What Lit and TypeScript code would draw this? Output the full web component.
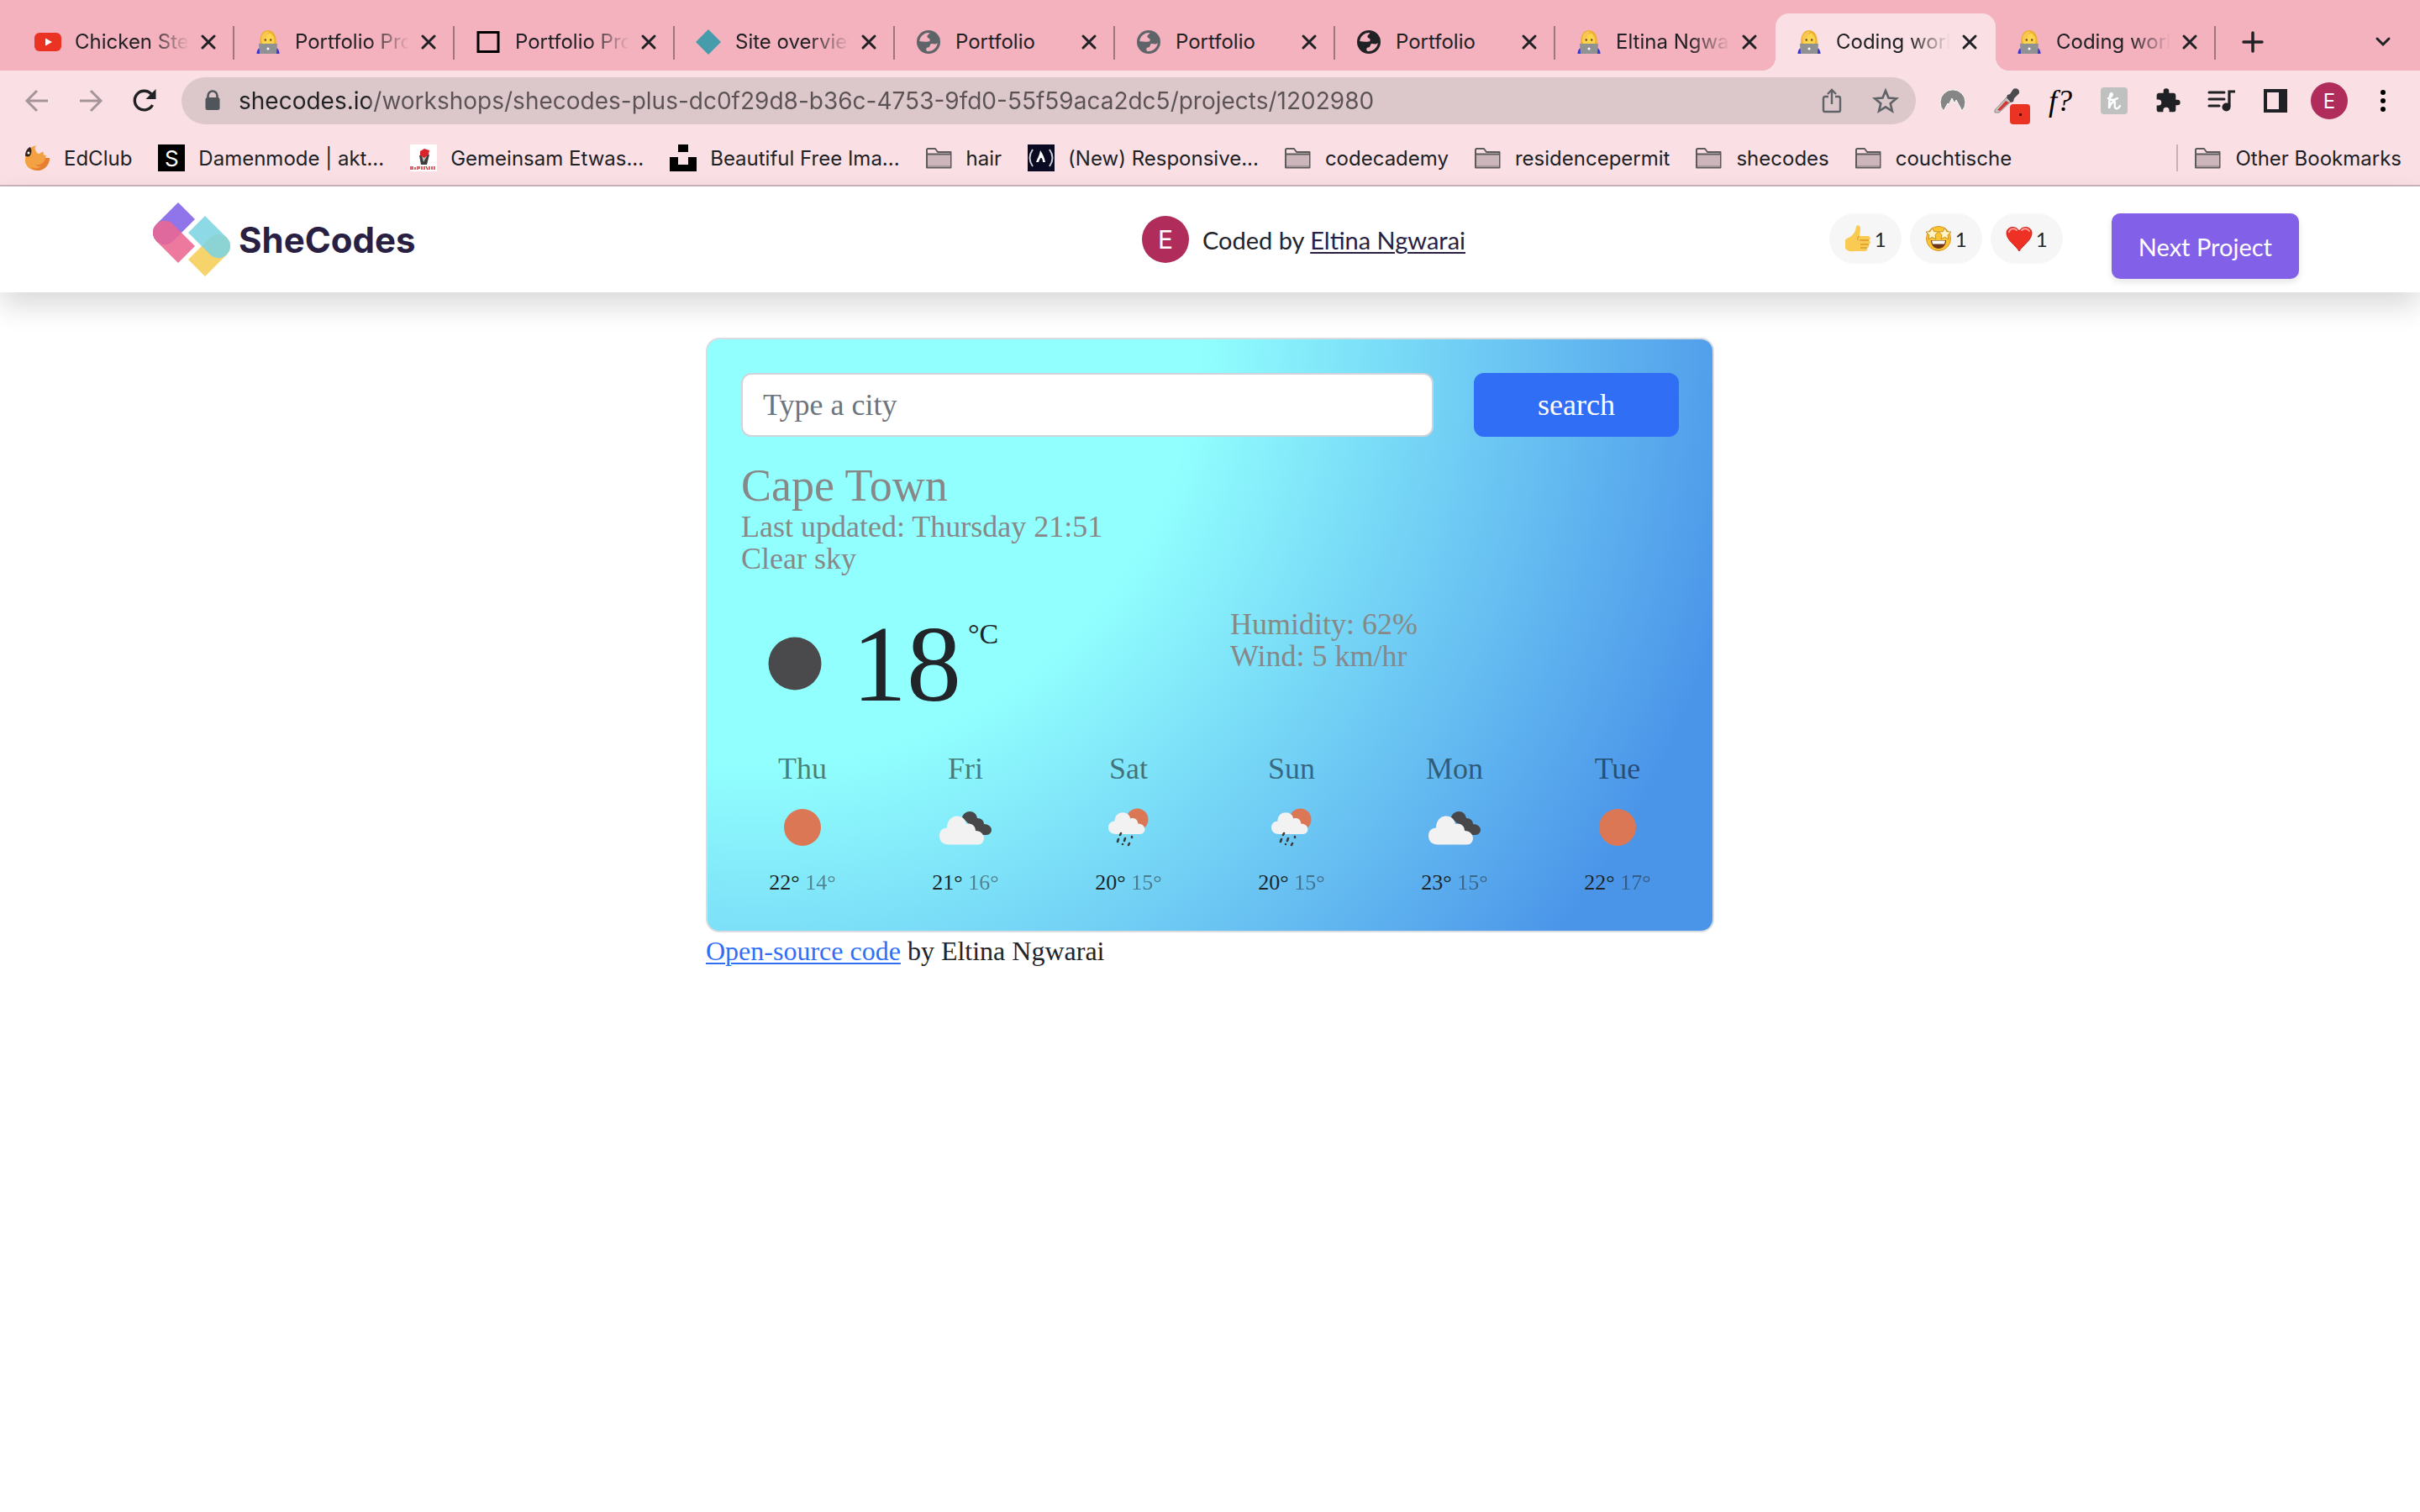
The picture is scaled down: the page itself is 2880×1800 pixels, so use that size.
import { LitElement, html, css, svg, nothing } from "lit";
import { customElement, property } from "lit/decorators.js";
import { classMap } from "lit/directives/class-map.js";

const coder = html`<svg class="ico" viewBox="0 0 32 32" width="32" height="32" aria-hidden="true">
  <path d="M2.500 30c0-3 1-6 4-7h19c3 1 4 4 4 7z" fill="#3a35d0" />
  <path d="M6.500 21C5 11 8 2 15.500 2S27 9 25.500 21z" fill="#eeb02f" />
  <path d="M8.500 14c0-3 2-5 5-6 2-1 4-2 5-3 2 2 5 5 5 9 0 5-3 8-7.500 8s-7.500-3-7.500-8z" fill="#fdd54c" />
  <path d="M8 16C7 8 11 3 17 3c-1 5-4 8-9 13z" fill="#f7c654" />
  <circle cx="12.800" cy="13.500" r="1.200" fill="#6b4218" /><circle cx="19.200" cy="13.500" r="1.200" fill="#6b4218" />
  <path d="M5 18h22l-1 12H6z" fill="#8f9193" /><circle cx="16" cy="24" r="1.500" fill="#fff" />
</svg>`;

const globe = (fill: string) => html`<svg class="ico" viewBox="-2 -2 32 32" width="32" height="32" aria-hidden="true">
  <path fill=${fill} fill-rule="evenodd" d="M14 0a14 14 0 1 0 0 28a14 14 0 0 0 0-28zM3.200 13A11 11 0 0 1 15.500 3.200C14.500 5 12 5.500 12.500 8c.5 2 3 1 3.200 3.500.1 2.500-2.200 2-3.700 2.200C9 14 6 13.500 3.200 13zM24.800 15A11 11 0 0 1 12 24.800c-1.500-2.500-.5-4.300 1.500-4.300 3 0 1.500-4 4-4.500 2.500-.4 4 2 7.300-1z" />
</svg>`;

const folder = html`<svg class="ico" viewBox="0 0 32 32" width="32" height="32" aria-hidden="true">
  <path d="M2 5h9l3 4h15.500V27.500H1V6z" fill="#fae0e4" stroke="#5d5a5b" stroke-width="2" stroke-linejoin="round" />
  <path d="M2 12h27v15H2z" fill="#ccb6bb" /><path d="M2 25h27v2H2z" fill="#a8989c" />
  <path d="M1 11.500h28.500" stroke="#5d5a5b" stroke-width="2" />
</svg>`;

const closeX = html`<svg viewBox="0 0 18 18" width="18" height="18" aria-hidden="true"><path d="M2 2l14 14M16 2L2 16" stroke="#202124" stroke-width="3" stroke-linecap="round" /></svg>`;

const youtube = html`<svg class="ico" viewBox="0 0 32 32" width="32" height="32" aria-hidden="true"><rect y="5" width="32" height="22" rx="6" fill="#eb3323" /><path d="M13 11.500l8 4.500-8 4.500z" fill="#fff" /></svg>`;
const square = html`<svg class="ico" viewBox="0 0 32 32" width="32" height="32" aria-hidden="true"><rect x="4" y="4.500" width="24" height="23" fill="none" stroke="#000" stroke-width="3" /></svg>`;
const diamond = html`<svg class="ico" viewBox="0 0 32 32" width="32" height="32" aria-hidden="true"><path d="M16 1l15 15-15 15L1 16z" fill="#469cab" /></svg>`;

const TABS = [
  { icon: youtube, title: "Chicken Ste" },
  { icon: coder, title: "Portfolio Pro" },
  { icon: square, title: "Portfolio Pro" },
  { icon: diamond, title: "Site overview" },
  { icon: globe("#5f6469"), title: "Portfolio" },
  { icon: globe("#5f6469"), title: "Portfolio" },
  { icon: globe("#202124"), title: "Portfolio" },
  { icon: coder, title: "Eltina Ngwa" },
  { icon: coder, title: "Coding work", active: true },
  { icon: coder, title: "Coding work" },
];

const edclub = html`<svg class="ico" viewBox="0 0 32 32" width="32" height="32" aria-hidden="true">
  <path d="M16 1c-4 2-2 6 0 9 4 3 5-2 8-1-1 2 0 4 3 4l-1 3h5c0 8-6 15-14 15C7 31 1 25 2 17 2 9 8 2 16 1z" fill="#f3a142" />
  <path d="M17 31c8 0 14-7 14-15h-5c-1 6-6 9-12 8 3 3 7 2 7 2-3 3-8 3-12 1 2 3 5 4 8 4z" fill="#e67f34" />
  <path d="M2 13c0-5 3-9 6-10 2 3 2 8-1 11-2 1-5 0-5-1z" fill="#33231a" /><circle cx="6" cy="10" r="1.500" fill="#fff" />
</svg>`;
const squareS = html`<span class="letter">S</span>`;
const redfig = html`<svg class="ico" viewBox="0 0 32 32" width="32" height="32" aria-hidden="true">
  <path d="M0 0h32v32H0z" fill="#fff" /><path d="M11 13l12-1-3 12h-7z" fill="#3d3d3f" /><path d="M14 14l2 7 4-7z" fill="#bbb" />
  <path d="M12 8l5-3 6 2-1 5-5 4-5-3z" fill="#d8232a" /><path d="M1 26v4m2-4v4m3-3v3m3-4v4m2-4v3m3-3v4m3-4v4m2-4l2 4m2-4v4m3-4v4m3-4v4" stroke="#c8373c" stroke-width="1.500" />
</svg>`;
const unsplash = html`<svg class="ico" viewBox="0 0 32 32" width="32" height="32" aria-hidden="true"><path d="M10 0h12v9H10zM0 15h10v9h12v-9h10v17H0z" /></svg>`;
const fcc = html`<svg class="ico" viewBox="0 0 32 32" width="32" height="32" aria-hidden="true">
  <path d="M0 0h32v32H0z" fill="#0a0a23" />
  <path d="M6 6Q-1 16 6 26M26 6q7 10 0 20" fill="none" stroke="#d0d0da" stroke-width="2" />
  <path d="M15 7c3 4 5 9 6 14h-3c0-3-1-5-2-5s-2 2-3 5h-3c2-5 4-8 5-14z" fill="#fff" />
</svg>`;

const BOOKMARKS = [
  { icon: edclub, label: "EdClub" },
  { icon: squareS, label: "Damenmode | akt..." },
  { icon: redfig, label: "Gemeinsam Etwas..." },
  { icon: unsplash, label: "Beautiful Free Ima..." },
  { icon: folder, label: "hair" },
  { icon: fcc, label: "(New) Responsive..." },
  { icon: folder, label: "codecademy" },
  { icon: folder, label: "residencepermit" },
  { icon: folder, label: "shecodes" },
  { icon: folder, label: "couchtische" },
];

@customElement("browser-chrome")
export class BrowserChrome extends LitElement {
  static styles = css`
    :host { display: block; font-family: Inter, "Liberation Sans", sans-serif; color: #202124; }
    button { border: 0; background: none; padding: 0; font: inherit; color: inherit; display: flex; align-items: center; justify-content: center; }
    svg { display: block; flex: none; overflow: visible; }
    .strip { display: flex; align-items: flex-end; height: 84px; background: #f4b1be; padding: 0 12px 0 17px; box-sizing: border-box; }
    .tab { flex: 0 1 262px; min-width: 0; height: 68px; display: flex; align-items: center; box-sizing: border-box; padding: 0 15px 0 24px; position: relative; font-size: 24px; }
    .tab::after { content: ""; position: absolute; right: 0; top: 15px; width: 2px; height: 40px; background: #9e7680; }
    .tab.active { background: #fae0e4; border-radius: 16px 16px 0 0; }
    .tab.active::after, .tab.quiet::after { display: none; }
    .tab.active::before { content: ""; position: absolute; left: -16px; right: -16px; bottom: 0; height: 16px;
      background: radial-gradient(circle at 0 0, transparent 16px, #fae0e4 16px) left / 16px 16px no-repeat,
        radial-gradient(circle at 100% 0, transparent 16px, #fae0e4 16px) right / 16px 16px no-repeat; }
    .title { flex: 1; min-width: 0; margin: 0 8px 0 16px; overflow: hidden; white-space: nowrap; line-height: 32px;
      -webkit-mask-image: linear-gradient(90deg, #000 88px, transparent 136px); mask-image: linear-gradient(90deg, #000 88px, transparent 136px); }
    .title.short { -webkit-mask-image: none; mask-image: none; }
    .close { width: 32px; height: 32px; }
    .add { width: 88px; height: 68px; }
    .spacer { flex: 1; }
    .chev { width: 64px; height: 68px; }
    .bar { display: flex; align-items: center; gap: 12px; height: 72px; padding: 0 12px; background: #fae0e4; box-sizing: border-box; }
    .group { display: flex; }
    .tool { width: 64px; height: 56px; position: relative; }
    .omni { flex: 1; display: flex; align-items: center; height: 56px; border-radius: 28px; background: #dcc7cb; padding: 0 4px 0 26px; }
    .url { flex: 1; min-width: 0; border: 0; outline: 0; padding: 0; margin: 0 0 0 20px; height: 48px; font: 28px Inter, "Liberation Sans", sans-serif;
      color: transparent; background: linear-gradient(90deg, #202124 156px, #5b5256 156px); -webkit-background-clip: text; background-clip: text; }
    .f { font: italic 36px "Liberation Serif", serif; color: #000; }
    .badge { position: absolute; right: 4px; bottom: 0; width: 24px; height: 24px; border-radius: 4px; background: #eb3323; display: flex; align-items: center; justify-content: center; }
    .badge::after { content: ""; width: 3px; height: 3px; background: #401010; }
    .avatar { width: 44px; height: 44px; border-radius: 50%; background: #b02c5a; color: #fff; font-size: 24px; display: flex; align-items: center; justify-content: center; }
    .marks { display: flex; align-items: center; height: 66px; gap: 31px; padding: 0 22px 0 28px; background: #fae0e4; border-bottom: 2px solid #cbb3bb; box-sizing: border-box; font-size: 24px; }
    .mark { display: flex; align-items: center; gap: 16px; color: inherit; text-decoration: none; white-space: nowrap; }
    .letter { width: 32px; height: 32px; background: #000; color: #fff; font-size: 26px; display: flex; align-items: center; justify-content: center; }
    .other { border-left: 2px solid #c7b1b6; padding-left: 20px; height: 32px; margin-left: auto; }
  `;

  render() {
    return html`
      <nav class="strip" aria-label="Tabs">
        ${TABS.map((t, i) => html`
          <div class=${classMap({ tab: true, active: !!t.active, quiet: !!TABS[i + 1]?.active })}>
            ${t.icon}
            <span class=${classMap({ title: true, short: t.title === "Portfolio" })}>${t.title}</span>
            <button class="close" aria-label="Close tab">${closeX}</button>
          </div>`)}
        <button class="add" aria-label="New tab"><svg viewBox="0 0 24 24" width="24" height="24"><path d="M12 1v22M1 12h22" stroke="#202124" stroke-width="3.500" stroke-linecap="round" /></svg></button>
        <span class="spacer"></span>
        <button class="chev" aria-label="Search tabs"><svg viewBox="0 0 18 12" width="18" height="12"><path d="M2 2l7 7 7-7" fill="none" stroke="#202124" stroke-width="3" stroke-linecap="round" /></svg></button>
      </nav>
      <div class="bar">
        <div class="group">
          <button class="tool" aria-label="Back"><svg viewBox="0 0 28 28" width="28" height="28"><path d="M27 14H3M14 2L2 14l12 12" fill="none" stroke="#a5959a" stroke-width="3" /></svg></button>
          <button class="tool" aria-label="Forward"><svg viewBox="0 0 28 28" width="28" height="28"><path d="M1 14h24M14 2l12 12-12 12" fill="none" stroke="#a5959a" stroke-width="3" /></svg></button>
          <button class="tool" aria-label="Reload"><svg viewBox="0 0 28 28" width="28" height="28"><path d="M23.500 19A11.300 11.300 0 1 1 22 6" fill="none" stroke="#202124" stroke-width="3.400" /><path d="M27.500 0v12h-12z" fill="#202124" /></svg></button>
        </div>
        <form class="omni" @submit=${(e: Event) => e.preventDefault()}>
          <svg viewBox="0 0 22 26" width="22" height="26"><path d="M5.500 10V7a5.500 5.500 0 0 1 11 0v3" fill="none" stroke="#50555a" stroke-width="2.600" /><rect x="2.500" y="9" width="17" height="15" rx="2.500" fill="#50555a" /></svg>
          <input class="url" aria-label="Address" value="shecodes.io/workshops/shecodes-plus-dc0f29d8-b36c-4753-9fd0-55f59aca2dc5/projects/1202980" />
          <button class="tool" type="button" aria-label="Share"><svg viewBox="0 0 24 30" width="24" height="30"><path d="M8 10H4a2 2 0 0 0-2 2v14a2 2 0 0 0 2 2h16a2 2 0 0 0 2-2V12a2 2 0 0 0-2-2h-4M12 19V3M7 7l5-5 5 5" fill="none" stroke="#5f6368" stroke-width="2.400" /></svg></button>
          <button class="tool" type="button" aria-label="Bookmark"><svg viewBox="0 0 30 30" width="30" height="30"><path d="M15 3l3.500 8.600 9.300.7-7.100 6 2.200 9-7.900-4.900-7.900 4.900 2.200-9-7.100-6 9.300-.7z" fill="none" stroke="#5f6368" stroke-width="2.600" /></svg></button>
        </form>
        <div class="group">
          <button class="tool" aria-label="VPN"><svg viewBox="0 0 32 28" width="32" height="28"><path d="M5 26A15 15 0 1 1 27 26L20 13l-2 4-3-6-4 8-1-2z" fill="#868686" stroke="#fff" stroke-width="1" /></svg></button>
          <button class="tool" aria-label="Colour picker"><svg viewBox="0 0 32 32" width="32" height="32"><path d="M2 27L16 12l5 5L7 30H2z" fill="#c9c4c4" stroke="#8b8b8b" /><path d="M5 27l10-11 4 2L8 28z" fill="#d23a35" /><path d="M17 9l3-1 4-6c3-2 8 0 7 5l-6 6-1 4-3 1-5-6z" fill="#4b4b4d" /></svg><span class="badge"></span></button>
          <button class="tool f" aria-label="Font finder">f?</button>
          <button class="tool" aria-label="Coupons"><svg viewBox="0 0 32 32" width="32" height="32"><rect width="32" height="32" rx="4" fill="#bfc0c0" /><path d="M9 13c4-1 6-5 4-6s-3 8-3 18c1-5 4-8 6-8s0 4 1 7c1 2 4 2 6-2M9 13c4 3 8 2 11 0" fill="none" stroke="#fff" stroke-width="2.400" stroke-linecap="round" /></svg></button>
          <button class="tool" aria-label="Extensions"><svg viewBox="0 0 24 24" width="32" height="32"><path d="M20.500 11H19V7c0-1.100-.9-2-2-2h-4V3.500a2.500 2.500 0 0 0-5 0V5H4c-1.100 0-2 .9-2 2v3.800h1.500a2.700 2.700 0 0 1 0 5.400H2V20c0 1.100.9 2 2 2h3.800v-1.500a2.700 2.700 0 0 1 5.400 0V22H17c1.100 0 2-.9 2-2v-4h1.500a2.500 2.500 0 0 0 0-5z" fill="#202124" /></svg></button>
          <button class="tool" aria-label="Media"><svg viewBox="0 0 32 28" width="32" height="28"><path d="M1 4h18M1 12h18M1 20h12" stroke="#202124" stroke-width="3" stroke-linecap="round" /><path d="M32 3h-7v18" fill="none" stroke="#202124" stroke-width="3.200" /><circle cx="21.500" cy="21.500" r="5" fill="#202124" /></svg></button>
          <button class="tool" aria-label="Side panel"><svg viewBox="0 0 28 28" width="28" height="28"><path d="M0 0h28v28H0zM4 4v20h14V4z" fill-rule="evenodd" fill="#202124" /></svg></button>
          <button class="tool" aria-label="Profile"><span class="avatar">E</span></button>
          <button class="tool" aria-label="Menu"><svg viewBox="0 0 6 28" width="6" height="28"><circle cx="3" cy="4" r="3" /><circle cx="3" cy="14" r="3" /><circle cx="3" cy="24" r="3" /></svg></button>
        </div>
      </div>
      <nav class="marks" aria-label="Bookmarks">
        ${BOOKMARKS.map((b) => html`<a class="mark" href="#">${b.icon}<span>${b.label}</span></a>`)}
        <a class="mark other" href="#">${folder}<span>Other Bookmarks</span></a>
      </nav>`;
  }
}

const thumb = html`<svg viewBox="0 0 32 32" width="32" height="32" aria-hidden="true">
  <path d="M1 19c0-3 4-4 6-5 4-3 6-6 7-12 1-3 5-2 5 2 0 4-1 6-1 9h10c3 0 4 4 1 5 3 1 2 5 0 5 1 2 0 4-2 4 1 3-1 4-3 4H12C6 32 1 30 1 26z" fill="#f9cb52" />
  <path d="M18 18h11M19 23h10M19 27h8" fill="none" stroke="#dc9a2b" stroke-width="1.400" />
  <path d="M18 13c-2 1-3 3-2 5" fill="none" stroke="#e5a93a" stroke-width="1.400" />
</svg>`;
const starEyes = html`<svg viewBox="0 0 32 32" width="32" height="32" aria-hidden="true">
  <circle cx="16" cy="16" r="14.500" fill="#f9c531" stroke="#dd9425" />
  <path d="M7 18h18c0 6-4 10-9 10s-9-4-9-10z" fill="#70361a" /><path d="M8 18.500h16l-1 4H9z" fill="#fff" />
  <path d="M8.500 3l2.200 4.600 5 .5-3.700 3.600 1 5.100-4.500-2.500L4 17l1-5.200L1 8.200l5.200-.6zM23.500 3l2.200 4.600 5.300.6-4 3.600 1 5.200-4.500-2.700-4.500 2.500 1-5.100-3.700-3.600 5-.5z" fill="#fff6c4" stroke="#c98a22" />
</svg>`;
const heart = html`<svg viewBox="0 0 32 32" width="32" height="32" aria-hidden="true">
  <path d="M16 31C12 24 1 18 1 9.500 1 1.500 12 0 16 7c4-7 15-5.500 15 2.500C31 18 20 24 16 31z" fill="#ef3125" stroke="#c9211c" />
  <path d="M4 8c1-4 6-5 9-2M19 6c3-3 7-2 9 1" fill="none" stroke="#ff9c93" stroke-width="2" stroke-linecap="round" />
</svg>`;

@customElement("project-header")
export class ProjectHeader extends LitElement {
  static styles = css`
    :host { display: block; font-family: Lato, "Liberation Sans", sans-serif; color: #212529; }
    .header { display: grid; grid-template-columns: 59fr 41fr auto; height: 126px; padding: 0 144px 0 182px; background: #fff; box-shadow: 0 16px 32px rgba(0, 0, 0, 0.15); box-sizing: border-box; }
    svg { display: block; flex: none; }
    .logo, .by { display: flex; align-items: center; text-decoration: none; }
    .logo { gap: 10px; color: #281f43; font: 700 42px Inter, sans-serif; justify-self: start; }
    .by { gap: 16px; font-size: 29px; }
    .by a { color: #281f43; text-decoration: underline; text-decoration-thickness: 2px; text-underline-offset: 3px; }
    .face { width: 56px; height: 56px; border-radius: 50%; background: #b02c5a; color: #fff; font: 30px Inter, sans-serif; display: flex; align-items: center; justify-content: center; }
    .actions { display: flex; align-items: flex-start; gap: 10px; padding-top: 32px; }
    button { border: 0; font: inherit; color: inherit; }
    .pill { display: flex; align-items: center; gap: 4px; width: 86px; height: 60px; padding: 0 0 0 18px; border-radius: 30px; background: #f6f6f6; font-size: 24px; }
    .next { height: 78px; padding: 0 32px; margin-left: 48px; border-radius: 10px; background: #8360e8; color: #fff; font-size: 29px; box-shadow: 0 4px 8px rgba(0, 0, 0, 0.1); }
  `;

  render() {
    return html`<header class="header">
      <a class="logo" href="#">
        <svg viewBox="0 0 92 88" width="92" height="88" aria-hidden="true">
          <path d="M30 0L50 20 24 46A14.100 14.100 0 0 1 4 26z" fill="#9075ea" />
          <path d="M30 72L50 52 24 26A14.100 14.100 0 0 0 4 46z" fill="#ea6690" fill-opacity=".87" />
          <path d="M62 88L42 68 68 42A14.100 14.100 0 0 1 88 62z" fill="#f6d36b" />
          <path d="M62 16L42 36 68 62A14.100 14.100 0 0 0 88 42z" fill="#7dd4e1" fill-opacity=".88" />
        </svg>
        <span>SheCodes</span>
      </a>
      <div class="by"><span class="face">E</span><span>Coded by <a href="#">Eltina Ngwarai</a></span></div>
      <div class="actions">
        ${[thumb, starEyes, heart].map((i) => html`<button class="pill">${i}<span>1</span></button>`)}
        <button class="next">Next Project</button>
      </div>
    </header>`;
  }
}

const cloudPath = "M11 39.500C5 39.500 0 36 0 29c0-6 4-9.500 9-9.500 0-8 5-14 12-14 6 0 10 4 11 9.500 6-2 11 2 11 8 6 0 10 4 10 9 0 4-3 7.500-7 7.500z";
const weather: Record<string, unknown> = {
  sun: svg`<circle cx="34" cy="35" r="22" fill="#dc7756" />`,
  clouds: svg`<g transform="translate(3 16)"><path d="M27 7C28 3 32 0 36 0c5 0 8 3 9 8 5 0 8 3 8 7 5 0 9 3 9 7 0 3-3 6-6 6H48z" fill="#48484a" /><path d="${cloudPath}" fill="#f2f2f2" /></g>`,
  rain: svg`<g transform="translate(10 12)"><circle cx="34.500" cy="13.500" r="13" fill="#dc7756" /><path transform="translate(0 1) scale(.82 .76)" d="${cloudPath}" fill="#f2f2f2" />
    <path d="M15 30l-1 2M12 37l-1 3M20 36l-1 3M28 34l0 1M17 43l0 0M25 42l-1 2" stroke="#3c3c3e" stroke-width="2.600" stroke-linecap="round" /></g>`,
};

const DAYS = [
  ["Thu", "sun", 22, 14],
  ["Fri", "clouds", 21, 16],
  ["Sat", "rain", 20, 15],
  ["Sun", "rain", 20, 15],
  ["Mon", "clouds", 23, 15],
  ["Tue", "sun", 22, 17],
] as const;

@customElement("weather-card")
export class WeatherCard extends LitElement {
  @property({ type: String }) city = "Cape Town";

  static styles = css`
    :host { display: block; max-width: 1200px; margin: 54px auto 0; font-family: "Liberation Serif", serif; color: #212529; }
    .card { border: 2px solid #d9dce0; border-radius: 16px; padding: 40px; background: radial-gradient(circle farthest-corner at 5% -3%, #91fffe 39%, #4b95e9 89%); }
    .search { display: flex; gap: 48px; }
    .city { flex: 1; min-width: 0; height: 76px; box-sizing: border-box; border: 2px solid #ced4da; border-radius: 12px; padding: 0 24px; background: #fff; font: 36px "Liberation Serif", serif; }
    .city::placeholder { color: #6c757d; opacity: 1; }
    .go { width: 244px; border: 0; border-radius: 12px; background: #306ef6; color: #fff; font: 36px "Liberation Serif", serif; }
    h1 { margin: 28px 0 0; font-size: 54px; line-height: 60px; font-weight: 400; color: #888; }
    ul { list-style: none; margin: 0; padding: 0; font-size: 36px; line-height: 38px; color: #888; }
    .now { display: grid; grid-template-columns: 1fr 1fr; column-gap: 48px; margin: 40px 0; }
    .temp { display: flex; height: 132px; align-items: center; }
    .moon { display: block; }
    .value { font-size: 130px; line-height: 132px; margin-left: 4px; }
    .unit { align-self: flex-start; margin: 12px 0 0 8px; font-size: 34px; line-height: 38px; }
    .days { display: grid; grid-template-columns: repeat(6, 1fr); margin: 0 -24px; }
    .day { display: flex; flex-direction: column; align-items: center; gap: 16px; }
    .name { font-size: 36px; line-height: 38px; color: rgba(0, 0, 0, 0.5); }
    .range { font-size: 26px; line-height: 34px; }
    .low { opacity: 0.5; }
    .foot { font-size: 32px; line-height: 44px; }
    .foot a { color: #306ef6; text-decoration: underline; text-decoration-thickness: 2px; text-underline-offset: 3px; }
  `;

  render() {
    return html`
      <section class="card">
        <form class="search" @submit=${(e: Event) => e.preventDefault()}>
          <input class="city" type="search" placeholder="Type a city" aria-label="City" />
          <button class="go">search</button>
        </form>
        <h1>${this.city}</h1>
        <ul><li>Last updated: Thursday 21:51</li><li>Clear sky</li></ul>
        <div class="now">
          <div class="temp">
            <svg class="moon" viewBox="0 0 128 128" width="128" height="128" aria-hidden="true"><circle cx="64" cy="64" r="31.500" fill="#4a4a4c" /></svg>
            <span class="value">18</span><span class="unit">°C</span>
          </div>
          <ul><li>Humidity: 62%</li><li>Wind: 5 km/hr</li></ul>
        </div>
        <div class="days">
          ${DAYS.map(([name, icon, hi, lo]) => html`<div class="day">
            <span class="name">${name}</span>
            <svg viewBox="0 0 68 68" width="68" height="68" aria-hidden="true">${weather[icon] ?? nothing}</svg>
            <span class="range">${hi}° <span class="low">${lo}°</span></span>
          </div>`)}
        </div>
      </section>
      <div class="foot"><a href="#">Open-source code</a> by Eltina Ngwarai</div>`;
  }
}

@customElement("app-root")
export class AppRoot extends LitElement {
  static styles = css`
    :host { display: block; min-height: 100vh; background: #fff; }
  `;

  render() {
    return html`<browser-chrome></browser-chrome><project-header></project-header><main><weather-card></weather-card></main>`;
  }
}
